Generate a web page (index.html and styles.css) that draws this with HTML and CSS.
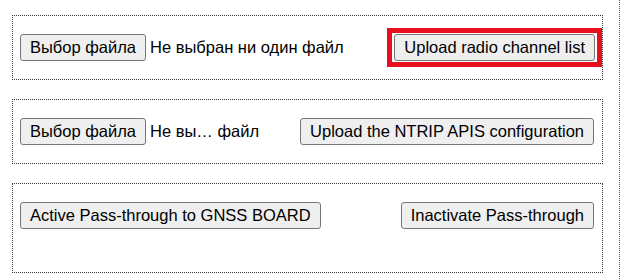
FILE: index.html
```html
<!DOCTYPE html>
<html>
<head>
  <title>Настройки</title>
  <link rel="stylesheet" href="styles.css">
</head>
<body>
  <div class="page">
    <!-- список радиоканалов -->
    <div class="section">
      <div class="file-pick">
        <button class="btn">Выбор файла</button>
        <span class="file-name">Не выбран ни один файл</span>
      </div>
      <span class="marked"><button class="btn">Upload radio channel list</button></span>
    </div>

    <!-- NTRIP -->
    <div class="section">
      <div class="file-pick">
        <button class="btn">Выбор файла</button>
        <span class="file-name">Не вы… файл</span>
      </div>
      <button class="btn">Upload the NTRIP APIS configuration</button>
    </div>

    <!-- pass-through -->
    <div class="section tall">
      <button class="btn">Active Pass-through to GNSS BOARD</button>
      <button class="btn">Inactivate Pass-through</button>
    </div>
  </div>
</body>
</html>
```

FILE: styles.css
```css
body {
  margin: 0;
  font-family: "Liberation Sans", Arial, sans-serif;
  font-size: 16.5px;
  color: #000;
  background-color: #fff;
}
.page {
  width: 620px;
  min-height: 279px;
  box-sizing: border-box;
  border-right: 1px dotted #555;
  padding: 15px 0 0 12px;
}
.section {
  width: 591px;
  height: 65px;
  box-sizing: border-box;
  border: 1px dotted #333;
  padding: 0 8px 0 7px;
  margin-bottom: 19px;
  display: flex;
  align-items: center;
  justify-content: space-between;
}
.section.tall {
  height: 90px;
  align-items: flex-start;
  padding-top: 18px;
}
.file-pick {
  display: flex;
  align-items: center;
}
.file-name {
  margin-left: 4px;
}
.btn {
  font-family: "Liberation Sans", Arial, sans-serif;
  font-size: 16.5px;
  color: #000;
  background-color: #efefef;
  border: 1px solid #767676;
  border-radius: 3px;
  padding: 3px 9px 4px;
  line-height: 18px;
}
.marked {
  display: flex;
  border: 5px solid #e8101e;
  padding: 1px 2px;
  margin: -7px -8px -7px 0;
}
```
